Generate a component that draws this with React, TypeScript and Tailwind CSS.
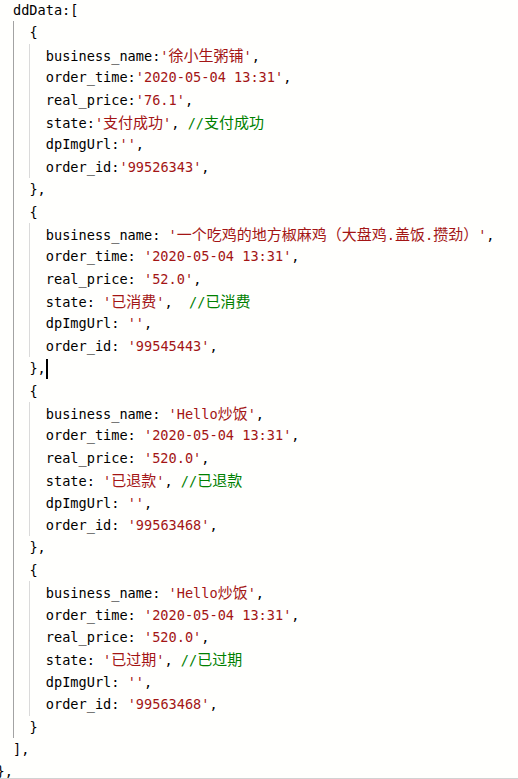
import React from "react";

type Order = {
  name: string;
  price: string;
  state: string;
  id: string;
  sep: string;
  gap: string;
};

const orders: Order[] = [
  { name: "徐小生粥铺", price: "76.1", state: "支付成功", id: "99526343", sep: "", gap: " " },
  { name: "一个吃鸡的地方椒麻鸡（大盘鸡.盖饭.攒劲）", price: "52.0", state: "已消费", id: "99545443", sep: " ", gap: "  " },
  { name: "Hello炒饭", price: "520.0", state: "已退款", id: "99563468", sep: " ", gap: " " },
  { name: "Hello炒饭", price: "520.0", state: "已过期", id: "99563468", sep: " ", gap: " " },
];

const cjk = /([\u3000-\u303f\u4e00-\u9fff\uff00-\uffef]+)/;

const Txt = ({ text }: { text: string }) => (
  <>
    {text.split(cjk).map((part, i) =>
      cjk.test(part) ? (
        <span key={i} className="font-['Noto_Sans_CJK_SC',sans-serif] text-[15px]">
          {part}
        </span>
      ) : (
        part
      )
    )}
  </>
);

const Line = ({ children }: { children: React.ReactNode }) => (
  <div className="h-[22.4px] whitespace-pre leading-[22.4px]">{children}</div>
);

const Str = ({ v }: { v: string }) => (
  <span className="text-[#a31515]">
    '<Txt text={v} />'
  </span>
);

const Cmt = ({ v }: { v: string }) => (
  <span className="text-[#008000]">
    //<Txt text={v} />
  </span>
);

const App = () => {
  return (
    <div className="h-[779px] overflow-hidden border-b border-[#d2d2d2] bg-[#fffffd]">
      <div className="-mt-[1px] -ml-[3.4px] font-['DejaVu_Sans_Mono','Liberation_Mono',monospace] text-[13.6px] text-black">
        <div className="pl-[16.4px]">
          <Line>ddData:[</Line>
          <div className="border-l border-[#a3a3a3] pl-[15.4px]">
            {orders.map((o, i) => (
              <div key={i}>
                <Line>{"{"}</Line>
                <div className="border-l border-[#dadada] pl-[15.4px]">
                  <Line>
                    business_name:{o.sep}
                    <Str v={o.name} />,
                  </Line>
                  <Line>
                    order_time:{o.sep}
                    <Str v="2020-05-04 13:31" />,
                  </Line>
                  <Line>
                    real_price:{o.sep}
                    <Str v={o.price} />,
                  </Line>
                  <Line>
                    state:{o.sep}
                    <Str v={o.state} />,{o.gap}
                    <Cmt v={o.state} />
                  </Line>
                  <Line>
                    dpImgUrl:{o.sep}
                    <Str v="" />,
                  </Line>
                  <Line>
                    order_id:{o.sep}
                    <Str v={o.id} />,
                  </Line>
                </div>
                <Line>
                  {i < orders.length - 1 ? "}," : "}"}
                  {i === 1 && (
                    <span className="inline-block h-[20px] w-[2px] bg-black align-middle" />
                  )}
                </Line>
              </div>
            ))}
          </div>
          <Line>],</Line>
        </div>
        <Line>{"},"}</Line>
      </div>
    </div>
  );
};

export default App;
